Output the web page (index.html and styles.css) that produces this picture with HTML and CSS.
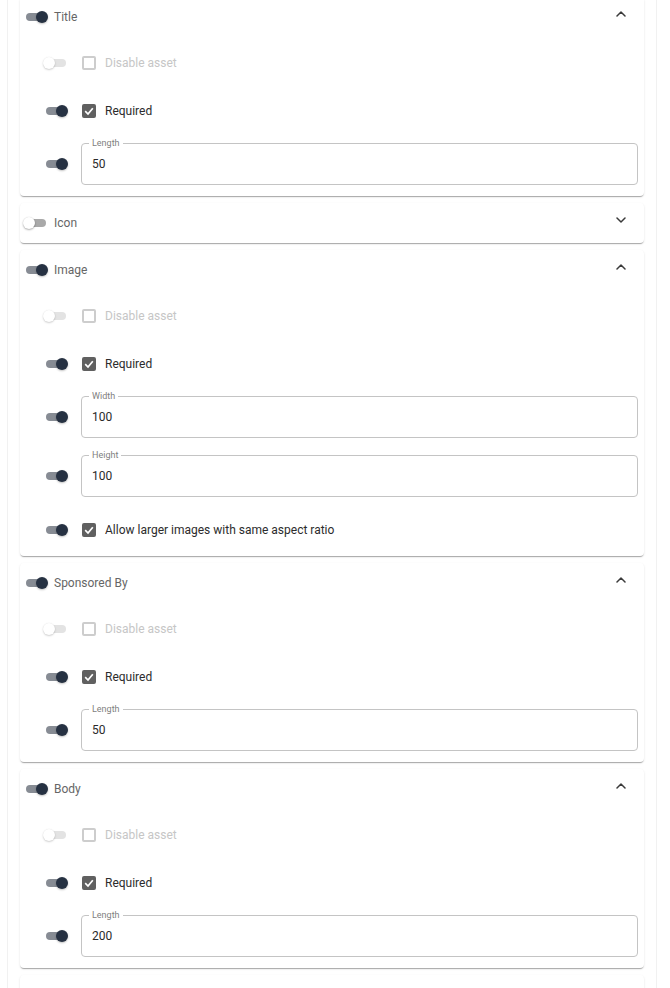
FILE: index.html
```html
<!DOCTYPE html>
<html lang="en">
<head>
<meta charset="utf-8">
<title>Native assets</title>
<link rel="stylesheet" href="styles.css">
</head>
<body>
<div class="panel-list">

  <section class="panel">
    <header class="panel-header">
      <span class="toggle on"><span class="thumb"></span></span>
      <span class="panel-title">Title</span>
      <svg class="chevron" viewBox="0 0 10 6"><polyline points="1,5 5,1 9,5"/></svg>
    </header>
    <div class="panel-body">
      <div class="row disabled">
        <span class="toggle"><span class="thumb"></span></span>
        <span class="checkbox"></span>
        <span class="row-label">Disable asset</span>
      </div>
      <div class="row">
        <span class="toggle on"><span class="thumb"></span></span>
        <span class="checkbox checked"><svg viewBox="0 0 14 14"><polyline points="3.2,7.2 6,10 10.8,4.2"/></svg></span>
        <span class="row-label">Required</span>
      </div>
      <div class="field-row">
        <span class="toggle on"><span class="thumb"></span></span>
        <div class="field"><span class="field-label">Length</span><span class="field-value">50</span></div>
      </div>
    </div>
  </section>

  <section class="panel">
    <header class="panel-header">
      <span class="toggle off-strong"><span class="thumb"></span></span>
      <span class="panel-title">Icon</span>
      <svg class="chevron" viewBox="0 0 10 6"><polyline points="1,1 5,5 9,1"/></svg>
    </header>
  </section>

  <section class="panel">
    <header class="panel-header">
      <span class="toggle on"><span class="thumb"></span></span>
      <span class="panel-title">Image</span>
      <svg class="chevron" viewBox="0 0 10 6"><polyline points="1,5 5,1 9,5"/></svg>
    </header>
    <div class="panel-body">
      <div class="row disabled">
        <span class="toggle"><span class="thumb"></span></span>
        <span class="checkbox"></span>
        <span class="row-label">Disable asset</span>
      </div>
      <div class="row">
        <span class="toggle on"><span class="thumb"></span></span>
        <span class="checkbox checked"><svg viewBox="0 0 14 14"><polyline points="3.2,7.2 6,10 10.8,4.2"/></svg></span>
        <span class="row-label">Required</span>
      </div>
      <div class="field-row">
        <span class="toggle on"><span class="thumb"></span></span>
        <div class="field"><span class="field-label">Width</span><span class="field-value">100</span></div>
      </div>
      <div class="field-row">
        <span class="toggle on"><span class="thumb"></span></span>
        <div class="field"><span class="field-label">Height</span><span class="field-value">100</span></div>
      </div>
      <div class="row">
        <span class="toggle on"><span class="thumb"></span></span>
        <span class="checkbox checked"><svg viewBox="0 0 14 14"><polyline points="3.2,7.2 6,10 10.8,4.2"/></svg></span>
        <span class="row-label">Allow larger images with same aspect ratio</span>
      </div>
    </div>
  </section>

  <section class="panel">
    <header class="panel-header">
      <span class="toggle on"><span class="thumb"></span></span>
      <span class="panel-title">Sponsored By</span>
      <svg class="chevron" viewBox="0 0 10 6"><polyline points="1,5 5,1 9,5"/></svg>
    </header>
    <div class="panel-body">
      <div class="row disabled">
        <span class="toggle"><span class="thumb"></span></span>
        <span class="checkbox"></span>
        <span class="row-label">Disable asset</span>
      </div>
      <div class="row">
        <span class="toggle on"><span class="thumb"></span></span>
        <span class="checkbox checked"><svg viewBox="0 0 14 14"><polyline points="3.2,7.2 6,10 10.8,4.2"/></svg></span>
        <span class="row-label">Required</span>
      </div>
      <div class="field-row">
        <span class="toggle on"><span class="thumb"></span></span>
        <div class="field"><span class="field-label">Length</span><span class="field-value">50</span></div>
      </div>
    </div>
  </section>

  <section class="panel">
    <header class="panel-header">
      <span class="toggle on"><span class="thumb"></span></span>
      <span class="panel-title">Body</span>
      <svg class="chevron" viewBox="0 0 10 6"><polyline points="1,5 5,1 9,5"/></svg>
    </header>
    <div class="panel-body">
      <div class="row disabled">
        <span class="toggle"><span class="thumb"></span></span>
        <span class="checkbox"></span>
        <span class="row-label">Disable asset</span>
      </div>
      <div class="row">
        <span class="toggle on"><span class="thumb"></span></span>
        <span class="checkbox checked"><svg viewBox="0 0 14 14"><polyline points="3.2,7.2 6,10 10.8,4.2"/></svg></span>
        <span class="row-label">Required</span>
      </div>
      <div class="field-row">
        <span class="toggle on"><span class="thumb"></span></span>
        <div class="field"><span class="field-label">Length</span><span class="field-value">200</span></div>
      </div>
    </div>
  </section>

  <section class="panel">
    <header class="panel-header">
      <span class="toggle on"><span class="thumb"></span></span>
    </header>
  </section>

</div>
</body>
</html>
```
FILE: styles.css
```css
html, body {
  margin: 0;
  padding: 0;
  background: #fff;
  overflow: hidden;
}

body {
  font-family: Roboto, "Liberation Sans", Arial, sans-serif;
  font-size: 12px;
  color: #2c2c2c;
}

.panel-list {
  margin: -3px 0 0 7px;
  width: 624px;
  padding: 0 12px;
  border-left: 1px solid #f1f1f1;
  border-right: 1px solid #f1f1f1;
  display: flex;
  flex-direction: column;
  gap: 7px;
}

.panel {
  background: #fff;
  border-radius: 4px;
  box-shadow: 0 2px 1px -1px rgba(0, 0, 0, 0.22), 0 1px 1px 0 rgba(0, 0, 0, 0.12), 0 1px 3px 0 rgba(0, 0, 0, 0.07);
}

.panel-header {
  height: 40px;
  display: flex;
  align-items: center;
  padding: 0 18px 0 6px;
}

.panel-title {
  margin-left: 8px;
  flex: 1;
  color: #666;
  font-size: 12px;
}

.chevron {
  width: 10px;
  height: 6px;
  margin-bottom: 6px;
  fill: none;
  stroke: #3a3a3a;
  stroke-width: 1.5;
  stroke-linecap: round;
  stroke-linejoin: round;
}

.panel-body {
  padding: 2px 0 2px;
}

/* toggle */
.toggle {
  position: relative;
  flex: none;
  width: 20px;
  height: 8px;
  border-radius: 4px;
  background: #d9d9d9;
}

.toggle .thumb {
  position: absolute;
  top: 50%;
  left: -3px;
  width: 12px;
  height: 12px;
  margin-top: -6px;
  border-radius: 50%;
  background: #fff;
  box-shadow: 0 1px 2px rgba(0, 0, 0, 0.3), 0 0 1px rgba(0, 0, 0, 0.15);
}

.toggle.off-strong {
  background: #a9a9a9;
}

.toggle.on {
  background: #878c94;
}

.toggle.on .thumb {
  left: 10px;
  background: #263142;
  box-shadow: 0 1px 2px rgba(0, 0, 0, 0.25);
}

/* checkbox rows */
.row {
  height: 48px;
  display: flex;
  align-items: center;
  padding-left: 26px;
}

.checkbox {
  flex: none;
  width: 14px;
  height: 14px;
  margin-left: 16px;
  box-sizing: border-box;
  border: 2px solid #8c8c8c;
  border-radius: 2px;
  display: flex;
}

.checkbox.checked {
  background: #606060;
  border-color: #606060;
}

.checkbox svg {
  width: 14px;
  height: 14px;
  margin: -2px;
  fill: none;
  stroke: #fff;
  stroke-width: 1.7;
}

.row-label {
  margin-left: 9px;
  color: #2c2c2c;
}

.row.disabled .toggle {
  background: #e3e3e3;
}

.row.disabled .thumb {
  box-shadow: 0 1px 2px rgba(0, 0, 0, 0.18), 0 0 1px rgba(0, 0, 0, 0.1);
}

.row.disabled .checkbox {
  border-color: #cdcdcd;
}

.row.disabled .row-label {
  color: #c6c6c6;
}

/* outlined fields */
.field-row {
  display: flex;
  align-items: center;
  padding: 8px 6px 9px 26px;
}

.field {
  position: relative;
  flex: 1;
  height: 42px;
  margin-left: 15px;
  box-sizing: border-box;
  border: 1px solid #c4c4c4;
  border-radius: 4px;
  display: flex;
  align-items: center;
  padding-left: 10px;
}

.field-label {
  position: absolute;
  top: -6px;
  left: 7px;
  padding: 0 3px;
  background: #fff;
  font-size: 9px;
  line-height: 11px;
  color: #808080;
}

.field-value {
  font-size: 12px;
  color: #2a2a2a;
}
```
